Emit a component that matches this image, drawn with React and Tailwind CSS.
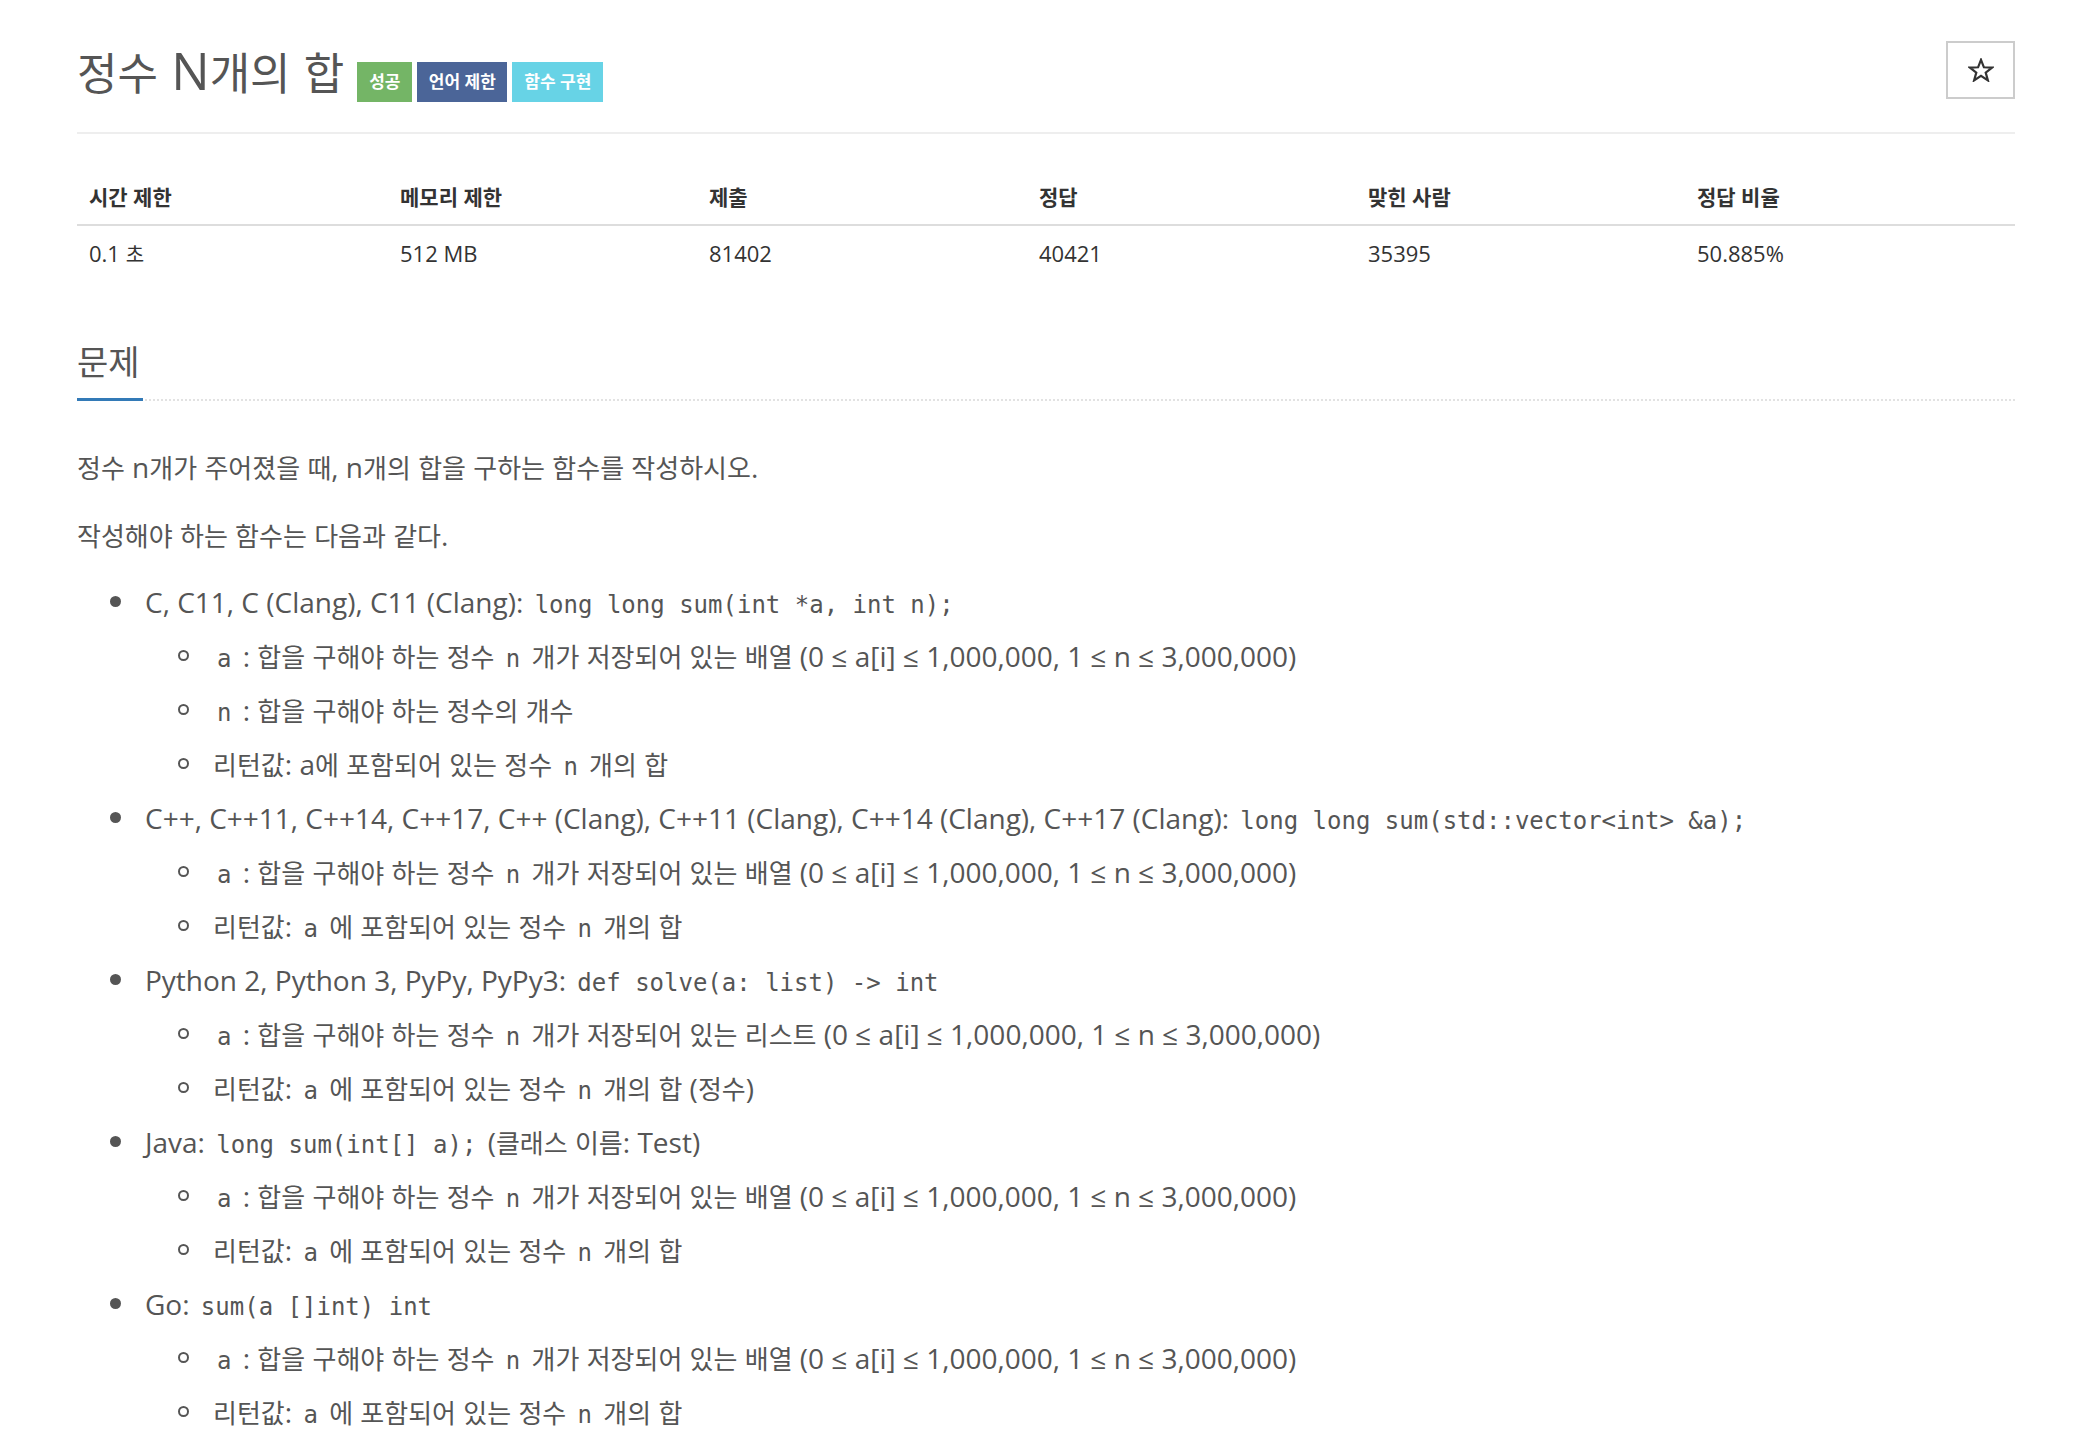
import React from "react";

const HANGUL = /([\uAC00-\uD7A3\u3131-\u318E]+)/;

function K({ t, k }) {
  const parts = t.split(HANGUL);
  return (
    <>
      {parts.map((p, i) =>
        i % 2 === 1 ? (
          <span key={i} className={k}>
            {p}
          </span>
        ) : (
          <React.Fragment key={i}>{p}</React.Fragment>
        )
      )}
    </>
  );
}

const B = ({ t }) => <K t={t} k="text-[26px]" />;

function C({ children }) {
  return (
    <code className="px-[4px] text-[24px] text-[#555] [font-family:'DejaVu_Sans_Mono',monospace]">
      {children}
    </code>
  );
}

function Li({ children, subs }) {
  return (
    <li>
      <div className="flex h-[54px]">
        <div className="w-[68px] shrink-0 flex items-center pl-[33px]">
          <span className="block w-[11px] h-[11px] rounded-full bg-[#555] -mt-[2px]" />
        </div>
        <div className="whitespace-nowrap h-[54px]">{children}</div>
      </div>
      {subs && (
        <ul className="pl-[68px]">
          {subs.map((s, i) => (
            <li key={i} className="flex h-[54px]">
              <div className="w-[68px] shrink-0 flex items-center pl-[33px]">
                <span className="block w-[11px] h-[11px] rounded-full border-2 border-[#555] -mt-[1px]" />
              </div>
              <div className="whitespace-nowrap h-[54px]">{s}</div>
            </li>
          ))}
        </ul>
      )}
    </li>
  );
}

const arrLine = (word) => (
  <>
    <C>a</C>
    <B t={` : 합을 구해야 하는 정수 `} />
    <C>n</C>
    <B t={` 개가 저장되어 있는 ${word} (0 ≤ a[i] ≤ 1,000,000, 1 ≤ n ≤ 3,000,000)`} />
  </>
);

const retLine = (tail) => (
  <>
    <B t="리턴값: " />
    <C>a</C>
    <B t=" 에 포함되어 있는 정수 " />
    <C>n</C>
    <B t={` 개의 합${tail}`} />
  </>
);

function Star() {
  return (
    <svg width="26" height="24" viewBox="0 0 26 24" fill="none">
      <path
        d="M13 1.8 L15.9 9.3 L24 9.6 L17.7 14.6 L19.9 22.4 L13 17.9 L6.1 22.4 L8.3 14.6 L2 9.6 L10.1 9.3 Z"
        stroke="#333"
        strokeWidth="2.2"
        strokeLinejoin="miter"
      />
    </svg>
  );
}

const heads = ["시간 제한", "메모리 제한", "제출", "정답", "맞힌 사람", "정답 비율"];
const vals = ["0.1 초", "512 MB", "81402", "40421", "35395", "50.885%"];

export default function App() {
  return (
    <div className="min-h-[1450px] bg-white pl-[77px] pr-[59px] text-[#555] [font-family:'Open_Sans','Noto_Sans_CJK_KR',sans-serif]">
      {/* title */}
      <div className="flex justify-between items-start pt-[41px] pb-[30px] border-b-2 border-[#eee]">
        <div className="flex items-start h-[61px]">
          <h1 className="mt-[1px] text-[51px] leading-[56px] font-normal text-[#555] whitespace-nowrap">
            <K t="정수 N개의 합" k="text-[44px]" />
          </h1>
          <div className="flex gap-[5px] ml-[13px] mt-[21px]">
            <span className="w-[55px] h-[40px] flex items-center justify-center bg-[#74b566] text-white text-[17px] font-bold">
              성공
            </span>
            <span className="w-[90px] h-[40px] flex items-center justify-center bg-[#4b6598] text-white text-[17px] font-bold">
              언어 제한
            </span>
            <span className="w-[91px] h-[40px] flex items-center justify-center bg-[#67d3e6] text-white text-[17px] font-bold">
              함수 구현
            </span>
          </div>
        </div>
        <button className="w-[69px] h-[58px] border-2 border-[#ccc] bg-white flex items-center justify-center">
          <Star />
        </button>
      </div>

      {/* table */}
      <div className="mt-[36px] text-[#333]">
        <div className="grid grid-cols-[311px_309px_330px_329px_329px_329px] border-b-2 border-[#ddd]">
          {heads.map((h) => (
            <div key={h} className="px-[12px] py-[12px] leading-[30px] text-[21px] font-bold">
              <K t={h} k="text-[21px]" />
            </div>
          ))}
        </div>
        <div className="grid grid-cols-[311px_309px_330px_329px_329px_329px]">
          {vals.map((v) => (
            <div key={v} className="px-[12px] py-[12px] leading-[30px] text-[22px]">
              <K t={v} k="text-[20px]" />
            </div>
          ))}
        </div>
      </div>

      {/* section header */}
      <div className="mt-[58px] border-b-2 border-dotted border-[#e2e2e2]">
        <h2 className="inline-block -mb-[2px] pb-[14px] border-b-[3px] border-[#337ab7] text-[34px] leading-[44px] font-normal text-[#555] pr-[3px]">
          문제
        </h2>
      </div>

      {/* description */}
      <div className="mt-[39px] text-[28px] leading-[54px]">
        <p className="mb-[14px] h-[54px] whitespace-nowrap">
          <B t="정수 n개가 주어졌을 때, n개의 합을 구하는 함수를 작성하시오." />
        </p>
        <p className="mb-[13px] h-[54px] whitespace-nowrap">
          <B t="작성해야 하는 함수는 다음과 같다." />
        </p>
        <ul>
          <Li
            subs={[
              arrLine("배열"),
              <>
                <C>n</C>
                <B t=" : 합을 구해야 하는 정수의 개수" />
              </>,
              <>
                <B t="리턴값: a에 포함되어 있는 정수 " />
                <C>n</C>
                <B t=" 개의 합" />
              </>,
            ]}
          >
            C, C11, C (Clang), C11 (Clang): <C>long long sum(int *a, int n);</C>
          </Li>
          <Li subs={[arrLine("배열"), retLine("")]}>
            C++, C++11, C++14, C++17, C++ (Clang), C++11 (Clang), C++14 (Clang), C++17 (Clang):{" "}
            <C>{"long long sum(std::vector<int> &a);"}</C>
          </Li>
          <Li subs={[arrLine("리스트"), retLine(" (정수)")]}>
            Python 2, Python 3, PyPy, PyPy3: <C>{"def solve(a: list) -> int"}</C>
          </Li>
          <Li subs={[arrLine("배열"), retLine("")]}>
            Java: <C>long sum(int[] a);</C>
            <B t=" (클래스 이름: Test)" />
          </Li>
          <Li subs={[arrLine("배열"), retLine("")]}>
            Go: <C>sum(a []int) int</C>
          </Li>
        </ul>
      </div>
    </div>
  );
}
